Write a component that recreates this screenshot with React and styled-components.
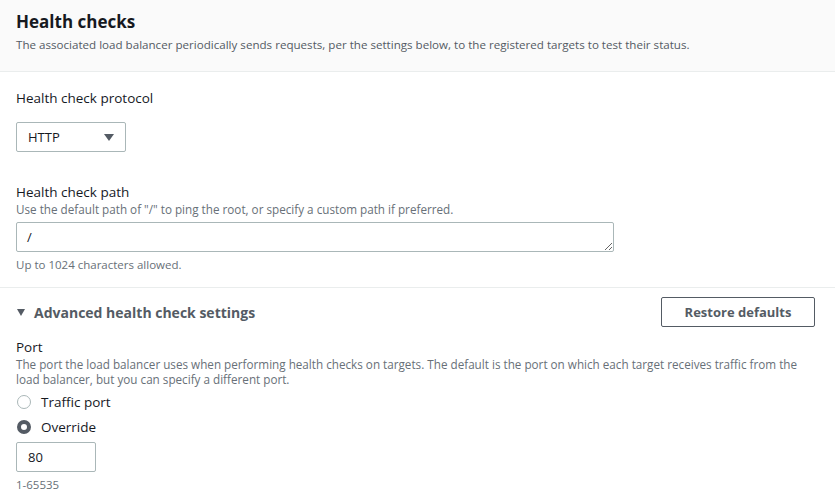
import styled, { createGlobalStyle } from "styled-components";

const GlobalStyle = createGlobalStyle`
  body {
    margin: 0;
    background: #ffffff;
    font-family: "Open Sans", "Noto Sans", sans-serif;
    color: #16191f;
  }
`;

const App = () => {
  return (
    <Panel>
      <GlobalStyle />
      <Header>
        <Title>Health checks</Title>
        <HeaderText>
          The associated load balancer periodically sends requests, per the
          settings below, to the registered targets to test their status.
        </HeaderText>
      </Header>
      <Body>
        <Field>
          <Label>Health check protocol</Label>
          <Select>
            <span>HTTP</span>
            <Caret />
          </Select>
        </Field>
        <Field top={30}>
          <Label>Health check path</Label>
          <Hint>
            Use the default path of "/" to ping the root, or specify a custom
            path if preferred.
          </Hint>
          <PathArea defaultValue="/" rows={1} />
          <Constraint>Up to 1024 characters allowed.</Constraint>
        </Field>
      </Body>
      <Advanced>
        <AdvancedHead>
          <Toggle>
            <ToggleCaret />
            Advanced health check settings
          </Toggle>
          <Button>Restore defaults</Button>
        </AdvancedHead>
        <Field top={10}>
          <Label>Port</Label>
          <Hint>
            The port the load balancer uses when performing health checks on
            targets. The default is the port on which each target receives
            traffic from the load balancer, but you can specify a different
            port.
          </Hint>
          <Radios>
            <RadioRow>
              <Radio />
              Traffic port
            </RadioRow>
            <RadioRow>
              <Radio checked />
              Override
            </RadioRow>
          </Radios>
          <PortInput defaultValue="80" />
          <Constraint>1-65535</Constraint>
        </Field>
      </Advanced>
    </Panel>
  );
};

const Panel = styled.div`
  width: 835px;
  height: 498px;
  overflow: hidden;
  background: #ffffff;
`;

const Header = styled.div`
  background: #fafafa;
  border-bottom: 1px solid #eaeded;
  padding: 10px 16px 0;
  height: 61px;
`;

const Title = styled.h2`
  margin: 0;
  font-size: 17px;
  line-height: 24px;
  font-weight: 700;
  color: #16191f;
`;

const HeaderText = styled.p`
  margin: 3px 0 0;
  font-size: 11.6px;
  line-height: 16px;
  color: #545b64;
`;

const Body = styled.div`
  padding: 16px 16px 14px;
  border-bottom: 1px solid #eaeded;
`;

const Field = styled.div`
  display: flex;
  flex-direction: column;
  align-items: flex-start;
  margin-top: ${(p) => p.top || 0}px;
`;

const Label = styled.div`
  font-size: 13.5px;
  line-height: 20px;
  color: #16191f;
`;

const Hint = styled.div`
  font-size: 11.7px;
  line-height: 15px;
  color: #687078;
  margin-bottom: 4px;
`;

const Constraint = styled.div`
  font-size: 11.5px;
  line-height: 16px;
  color: #687078;
  margin-top: 5px;
`;

const Select = styled.div`
  box-sizing: border-box;
  margin-top: 14px;
  width: 110px;
  height: 30px;
  border: 1px solid #aab7b8;
  border-radius: 2px;
  display: flex;
  align-items: center;
  justify-content: space-between;
  padding: 0 11px 0 11px;
  font-size: 13px;
  color: #16191f;
`;

const Caret = styled.span`
  width: 0;
  height: 0;
  border-left: 5px solid transparent;
  border-right: 5px solid transparent;
  border-top: 7px solid #545b64;
`;

const PathArea = styled.textarea`
  box-sizing: border-box;
  width: 598px;
  height: 30px;
  margin: 1px 0 0;
  border: 1px solid #aab7b8;
  border-radius: 2px;
  padding: 5px 10px;
  font-family: "Open Sans", "Noto Sans", sans-serif;
  font-size: 13px;
  line-height: 18px;
  color: #16191f;
  resize: vertical;
  overflow: hidden;
`;

const Advanced = styled.div`
  padding: 9px 20px 0 16px;
`;

const AdvancedHead = styled.div`
  display: flex;
  align-items: center;
  justify-content: space-between;
`;

const Toggle = styled.div`
  display: flex;
  align-items: center;
  gap: 9px;
  font-size: 14px;
  font-weight: 700;
  color: #545b64;
`;

const ToggleCaret = styled.span`
  width: 0;
  height: 0;
  margin-left: 1px;
  border-left: 4px solid transparent;
  border-right: 4px solid transparent;
  border-top: 7px solid #545b64;
`;

const Button = styled.button`
  box-sizing: border-box;
  width: 154px;
  height: 30px;
  background: #ffffff;
  border: 1px solid #545b64;
  border-radius: 2px;
  font-family: "Open Sans", "Noto Sans", sans-serif;
  font-size: 13px;
  font-weight: 700;
  color: #545b64;
`;

const Radios = styled.div`
  display: flex;
  flex-direction: column;
  gap: 5px;
  margin-top: 1px;
`;

const RadioRow = styled.label`
  display: flex;
  align-items: center;
  gap: 10px;
  font-size: 13.5px;
  line-height: 20px;
  color: #16191f;
`;

const Radio = styled.span`
  box-sizing: border-box;
  width: 14px;
  height: 14px;
  border-radius: 50%;
  margin-left: 1px;
  border: ${(p) => (p.checked ? "4px solid #545b64" : "1px solid #aab7b8")};
  background: #ffffff;
`;

const PortInput = styled.input`
  box-sizing: border-box;
  width: 80px;
  height: 30px;
  margin-top: 5px;
  border: 1px solid #aab7b8;
  border-radius: 2px;
  padding: 0 11px;
  font-family: "Open Sans", "Noto Sans", sans-serif;
  font-size: 13px;
  color: #16191f;
`;

export default App;
